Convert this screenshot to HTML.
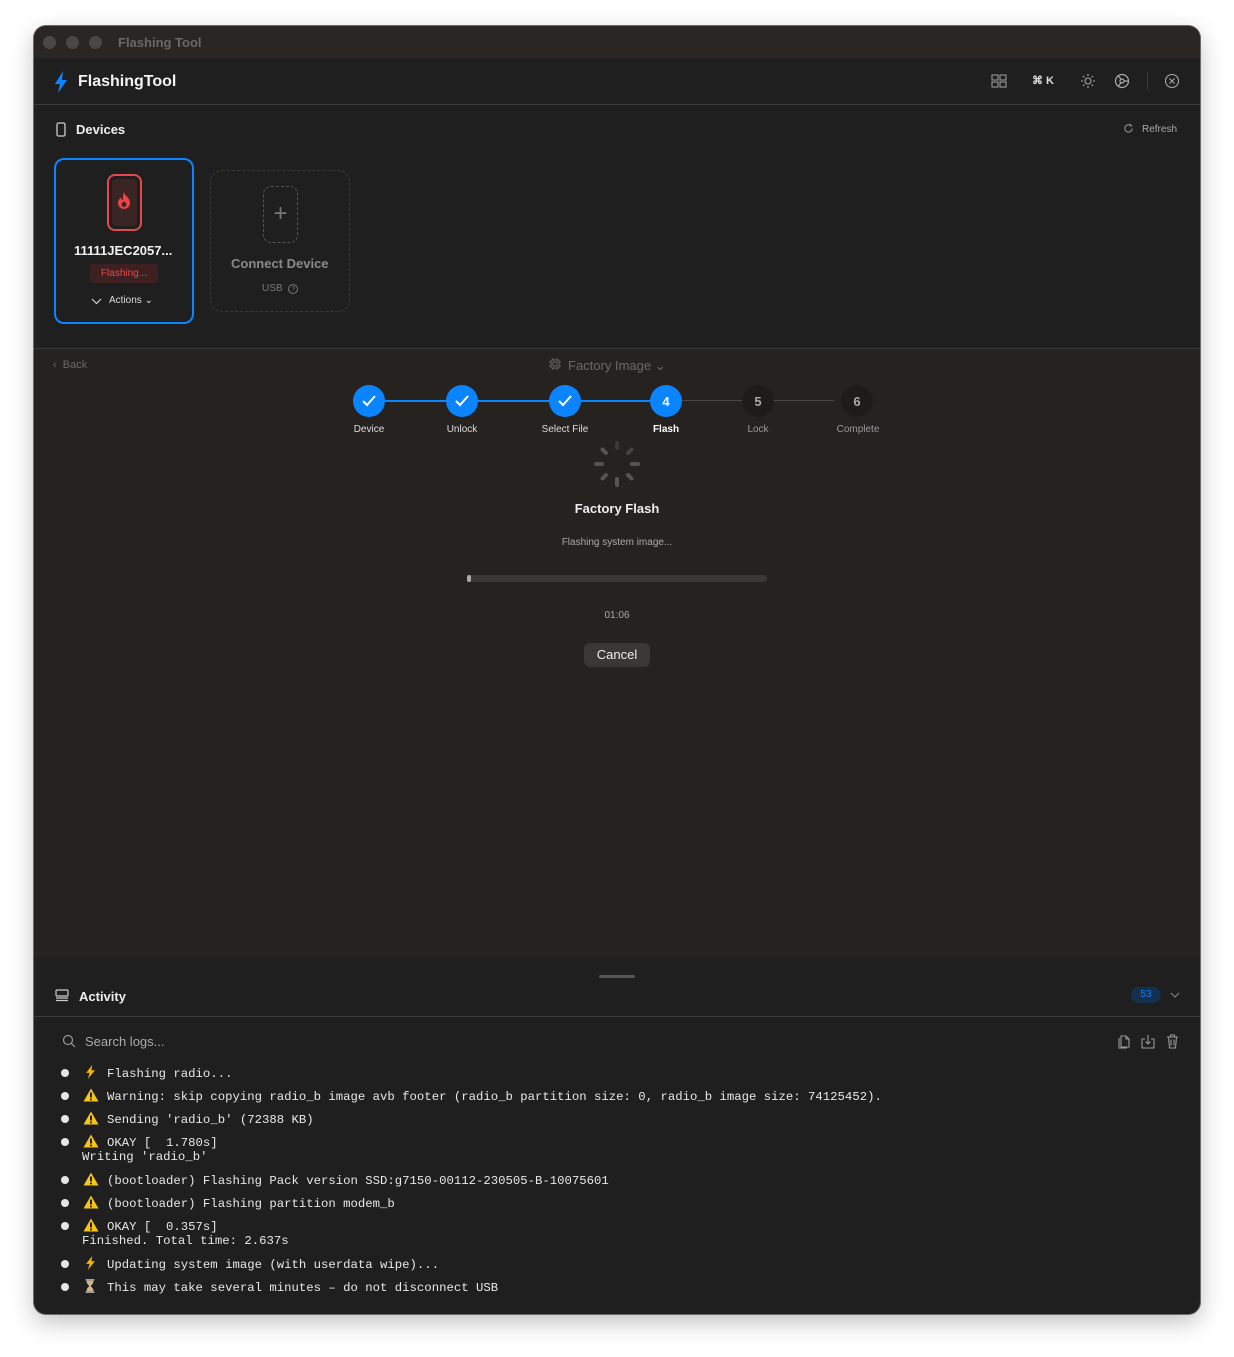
<!DOCTYPE html>
<html><head><meta charset="utf-8"><style>
*{box-sizing:border-box;margin:0;padding:0}
body{width:1234px;height:1357px;background:#fff;position:relative;font-family:"Liberation Sans",sans-serif;overflow:hidden}
.win{position:absolute;left:34px;top:26px;width:1166px;height:1288px;border-radius:12px;overflow:hidden;background:#1f1f1f;box-shadow:0 0 0 1px #6a6a6a,0 8px 24px rgba(0,0,0,.25)}
.a{position:absolute}
.t{position:absolute;white-space:nowrap}
.mono{font-family:"Liberation Mono",monospace;font-size:12.3px;color:#e8e8e8;white-space:pre}
.dot{position:absolute;width:8px;height:8px;border-radius:50%;background:#e6e6e6}
.ic{display:inline-block;width:24px;vertical-align:-2px}
.step{position:absolute;width:32px;height:32px;border-radius:50%;top:359px;display:flex;align-items:center;justify-content:center;font-weight:bold;font-size:13px}
.lbl{position:absolute;top:398px;font-size:10px;transform:translateX(-50%);white-space:nowrap}
</style></head><body>
<svg width="0" height="0" style="position:absolute"><defs>
<symbol id="w" viewBox="0 0 16 14"><path d="M8 0.5L15.5 13.5H0.5z" fill="#f5c518"/><path d="M8 4.5v5" stroke="#111" stroke-width="1.8"/><circle cx="8" cy="11.5" r="1" fill="#111"/></symbol>
<symbol id="b" viewBox="0 0 16 16"><path d="M10 0L3 9h4l-2 7 8-10H9z" fill="#f5b800"/></symbol>
<symbol id="h" viewBox="0 0 16 16"><path d="M3 1h10M3 15h10" stroke="#ccc" stroke-width="1.5"/><path d="M4 2h8c0 4-3 5-3 6s3 2 3 6H4c0-4 3-5 3-6S4 6 4 2z" fill="#d9b48a"/></symbol>
</defs></svg>
<div class="win">
 <div class="a" style="left:0;top:0;width:1166px;height:32px;background:#2a2624"></div>
 <div class="a" style="left:9px;top:10px;width:13px;height:13px;border-radius:50%;background:#4b4745"></div>
 <div class="a" style="left:32px;top:10px;width:13px;height:13px;border-radius:50%;background:#4b4745"></div>
 <div class="a" style="left:55px;top:10px;width:13px;height:13px;border-radius:50%;background:#4b4745"></div>
 <div class="t" style="left:84px;top:9px;font-size:13px;font-weight:bold;color:#6c6763">Flashing Tool</div>
 <div class="a" style="left:0;top:32px;width:1166px;height:47px;background:#1f1f1f;border-bottom:1px solid #3a3a3a"></div>
 <svg class="a" style="left:20px;top:45px" width="14" height="22" viewBox="0 0 14 22"><path d="M9 0L1 13h5l-2 9 9-13H8z" fill="#0a84ff"/></svg>
 <div class="t" style="left:44px;top:47px;font-size:16px;font-weight:bold;color:#f2f2f2">FlashingTool</div>
 <svg class="a" style="left:957px;top:48px" width="16" height="14" viewBox="0 0 16 14" fill="none" stroke="#999" stroke-width="1.1"><rect x="1" y="1" width="6" height="5"/><rect x="9" y="1" width="6" height="5"/><rect x="1" y="8" width="6" height="5"/><rect x="9" y="8" width="6" height="5"/></svg>
 <div class="t" style="left:998px;top:48px;font-size:11px;color:#ddd;font-weight:bold">⌘ K</div>
 <svg class="a" style="left:1046px;top:47px" width="16" height="16" viewBox="0 0 16 16" fill="none" stroke="#aaa" stroke-width="1.1"><circle cx="8" cy="8" r="3"/><path d="M8 1v2M8 13v2M1 8h2M13 8h2M3 3l1.4 1.4M11.6 11.6L13 13M3 13l1.4-1.4M11.6 4.4L13 3"/></svg>
 <svg class="a" style="left:1080px;top:47px" width="16" height="16" viewBox="0 0 16 16" fill="none" stroke="#aaa" stroke-width="1.2"><circle cx="8" cy="8" r="6.5"/><circle cx="8" cy="8" r="2"/><path d="M10 8h4.5M7 6.2L4 2.5M7 9.8L4 13.5"/></svg>
 <div class="a" style="left:1113px;top:46px;width:1px;height:18px;background:#3a3a3a"></div>
 <svg class="a" style="left:1130px;top:47px" width="16" height="16" viewBox="0 0 16 16" fill="none" stroke="#aaa" stroke-width="1.1"><circle cx="8" cy="8" r="6.5"/><path d="M5.5 5.5l5 5M10.5 5.5l-5 5"/></svg>
 <svg class="a" style="left:22px;top:96px" width="10" height="15" viewBox="0 0 10 15" fill="none" stroke="#ccc" stroke-width="1.3"><rect x="1" y="1" width="8" height="13" rx="1.5"/></svg>
 <div class="t" style="left:42px;top:96px;font-size:13px;font-weight:bold;color:#eee">Devices</div>
 <svg class="a" style="left:1089px;top:97px" width="11" height="11" viewBox="0 0 12 12" fill="none" stroke="#999" stroke-width="1.1"><path d="M10 6a4 4 0 1 1-2-3.5M8 0.8v2.2h2.2"/></svg>
 <div class="t" style="left:1108px;top:98px;font-size:10px;color:#aaa">Refresh</div>
 <div class="a" style="left:20px;top:132px;width:140px;height:166px;border:2px solid #0a84ff;border-radius:10px"></div>
 <div class="a" style="left:73px;top:148px;width:35px;height:57px;border:2px solid #e5484d;border-radius:8px;padding:3px"><div style="width:100%;height:100%;background:#3a2424;border-radius:4px"></div></div>
 <svg class="a" style="left:83px;top:166px" width="14" height="17" viewBox="0 0 14 17"><path d="M7 0C8 4 13 6 13 11a6 6 0 0 1-12 0c0-3 2-4 3-6 0 2 1 3 2 3C6 5 6 3 7 0z" fill="#ee4444"/><path d="M7 9c1 1.5 2.5 2 2.5 3.5a2.5 2.5 0 0 1-5 0C4.5 11 6 10.5 7 9z" fill="#3a2424"/></svg>
 <div class="t" style="left:40px;top:217px;font-size:13px;font-weight:bold;color:#f2f2f2">11111JEC2057...</div>
 <div class="a" style="left:56px;top:238px;width:68px;height:19px;background:#3f2020;border-radius:3px;color:#e5484d;font-size:10px;text-align:center;line-height:19px">Flashing...</div>
 <svg class="a" style="left:57px;top:272px" width="11" height="7" viewBox="0 0 11 7" fill="none" stroke="#ddd" stroke-width="1.1"><path d="M1 1l4.5 4.5L10 1"/></svg>
 <div class="t" style="left:75px;top:269px;font-size:10px;color:#ddd">Actions ⌄</div>
 <div class="a" style="left:176px;top:144px;width:140px;height:142px;border:1.5px dashed #3a3a3a;border-radius:12px"></div>
 <div class="a" style="left:229px;top:160px;width:35px;height:57px;border:1.5px dashed #555;border-radius:8px;color:#777;font-size:24px;text-align:center;line-height:54px;font-weight:lighter">+</div>
 <div class="t" style="left:197px;top:230px;font-size:13px;color:#8a8a8a;font-weight:bold">Connect Device</div>
 <div class="t" style="left:228px;top:257px;font-size:10px;color:#777">USB <span style="display:inline-block;width:10px;height:10px;border:1px solid #777;border-radius:50%;font-size:7px;text-align:center;line-height:9px;margin-left:3px">?</span></div>
 <div class="a" style="left:0;top:322px;width:1166px;height:610px;background:#262220;border-top:1px solid #3a3a3a"></div>
 <div class="t" style="left:19px;top:333px;font-size:11px;color:#6d6864">‹&nbsp; Back</div>
 <svg class="a" style="left:515px;top:332px" width="12" height="12" viewBox="0 0 12 12" fill="none" stroke="#666" stroke-width="1"><rect x="2" y="2" width="8" height="8" rx="1"/><rect x="4" y="4" width="4" height="4"/><path d="M4 0v2M8 0v2M4 10v2M8 10v2M0 4h2M0 8h2M10 4h2M10 8h2"/></svg>
 <div class="t" style="left:534px;top:332px;font-size:13px;color:#6d6864">Factory Image ⌄</div>
 <div class="a" style="left:351px;top:374px;width:214px;height:2px;background:#0a84ff"></div>
 <div class="a" style="left:557px;top:374px;width:60px;height:2px;background:#0a84ff"></div>
 <div class="a" style="left:648px;top:374px;width:60px;height:1px;background:#4a4644"></div>
 <div class="a" style="left:740px;top:374px;width:60px;height:1px;background:#4a4644"></div>
 <div class="step" style="left:319px;background:#0a84ff"><svg width="14" height="12" viewBox="0 0 14 12" fill="none" stroke="#fff" stroke-width="2"><path d="M1 6l4 4 8-9"/></svg></div>
 <div class="step" style="left:412px;background:#0a84ff"><svg width="14" height="12" viewBox="0 0 14 12" fill="none" stroke="#fff" stroke-width="2"><path d="M1 6l4 4 8-9"/></svg></div>
 <div class="step" style="left:515px;background:#0a84ff"><svg width="14" height="12" viewBox="0 0 14 12" fill="none" stroke="#fff" stroke-width="2"><path d="M1 6l4 4 8-9"/></svg></div>
 <div class="step" style="left:616px;background:#0a84ff;color:#fff">4</div>
 <div class="step" style="left:708px;background:#1e1c1b;color:#aaa">5</div>
 <div class="step" style="left:807px;background:#1e1c1b;color:#aaa">6</div>
 <div class="lbl" style="left:335px;color:#ddd">Device</div>
 <div class="lbl" style="left:428px;color:#ddd">Unlock</div>
 <div class="lbl" style="left:531px;color:#ddd">Select File</div>
 <div class="lbl" style="left:632px;color:#fff;font-weight:bold">Flash</div>
 <div class="lbl" style="left:724px;color:#999">Lock</div>
 <div class="lbl" style="left:824px;color:#999">Complete</div>
 <svg class="a" style="left:559px;top:414px" width="48" height="48" viewBox="-24 -24 48 48" stroke-width="4" stroke-linecap="round">
  <g stroke="#555"><path d="M0-16v-5" stroke="#3a3a3a"/><path d="M11-11l3.5-3.5" stroke="#444"/><path d="M15 0h6"/><path d="M11 11l3.5 3.5"/><path d="M0 15v6"/><path d="M-11 11l-3.5 3.5"/><path d="M-15 0h-6"/><path d="M-11-11l-3.5-3.5"/></g></svg>
 <div class="t" style="left:0;width:1166px;text-align:center;top:475px;font-size:13px;font-weight:bold;color:#eee">Factory Flash</div>
 <div class="t" style="left:0;width:1166px;text-align:center;top:511px;font-size:10px;color:#aaa">Flashing system image...</div>
 <div class="a" style="left:433px;top:549px;width:300px;height:7px;border-radius:4px;background:#3a3737"></div>
 <div class="a" style="left:433px;top:549px;width:4px;height:7px;border-radius:3px;background:#aaa"></div>
 <div class="t" style="left:0;width:1166px;text-align:center;top:584px;font-size:10px;color:#aaa">01:06</div>
 <div class="a" style="left:550px;top:617px;width:66px;height:24px;border-radius:6px;background:#3a3735;color:#eee;font-size:13px;text-align:center;line-height:24px">Cancel</div>
 <div class="a" style="left:565px;top:949px;width:36px;height:3px;border-radius:2px;background:#555"></div>
 <svg class="a" style="left:21px;top:963px" width="14" height="13" viewBox="0 0 14 13" fill="none" stroke="#ccc" stroke-width="1.2"><rect x="1" y="1" width="12" height="6" rx="1"/><path d="M1 9h12M1 11.5h12"/></svg>
 <div class="t" style="left:45px;top:963px;font-size:13px;font-weight:bold;color:#eee">Activity</div>
 <div class="a" style="left:1097px;top:961px;width:30px;height:16px;border-radius:8px;background:#15304d;color:#0a84ff;font-size:10px;text-align:center;line-height:16px">53</div>
 <svg class="a" style="left:1136px;top:966px" width="10" height="6" viewBox="0 0 10 6" fill="none" stroke="#888" stroke-width="1.1"><path d="M1 1l4 4 4-4"/></svg>
 <div class="a" style="left:0;top:990px;width:1166px;height:1px;background:#3a3a3a"></div>
 <svg class="a" style="left:28px;top:1008px" width="14" height="14" viewBox="0 0 14 14" fill="none" stroke="#999" stroke-width="1.2"><circle cx="6" cy="6" r="4.5"/><path d="M9.3 9.3L13 13"/></svg>
 <div class="t" style="left:51px;top:1008px;font-size:13px;color:#aaa">Search logs...</div>
 <svg class="a" style="left:1082px;top:1007px" width="16" height="16" viewBox="0 0 16 16" fill="none" stroke="#999" stroke-width="1.1"><path d="M5 3h5l3 3v8H5z"/><path d="M3 5v10h8"/><path d="M10 3v3h3"/></svg>
 <svg class="a" style="left:1107px;top:1008px" width="14" height="15" viewBox="0 0 14 15" fill="none" stroke="#999" stroke-width="1.1"><path d="M4 5H1v9h12V5h-3M7 1v9M4.5 7.5L7 10l2.5-2.5"/></svg>
 <svg class="a" style="left:1132px;top:1008px" width="13" height="15" viewBox="0 0 13 15" fill="none" stroke="#999" stroke-width="1.1"><path d="M1 3h11M4.5 3V1h4v2M2.5 3l1 11h6l1-11M5 5.5v6M8 5.5v6"/></svg>
 <div class="dot" style="left:27px;top:1043px"></div><div class="t mono" style="left:49px;top:1039px"><span class="ic"><svg width="15" height="14"><use href="#b"/></svg></span>Flashing radio...</div>
 <div class="dot" style="left:27px;top:1066px"></div><div class="t mono" style="left:49px;top:1062px"><span class="ic"><svg width="16" height="14"><use href="#w"/></svg></span>Warning: skip copying radio_b image avb footer (radio_b partition size: 0, radio_b image size: 74125452).</div>
 <div class="dot" style="left:27px;top:1089px"></div><div class="t mono" style="left:49px;top:1085px"><span class="ic"><svg width="16" height="14"><use href="#w"/></svg></span>Sending 'radio_b' (72388 KB)</div>
 <div class="dot" style="left:27px;top:1112px"></div><div class="t mono" style="left:49px;top:1108px"><span class="ic"><svg width="16" height="14"><use href="#w"/></svg></span>OKAY [  1.780s]</div>
 <div class="t mono" style="left:48px;top:1124px">Writing 'radio_b'</div>
 <div class="dot" style="left:27px;top:1150px"></div><div class="t mono" style="left:49px;top:1146px"><span class="ic"><svg width="16" height="14"><use href="#w"/></svg></span>(bootloader) Flashing Pack version SSD:g7150-00112-230505-B-10075601</div>
 <div class="dot" style="left:27px;top:1173px"></div><div class="t mono" style="left:49px;top:1169px"><span class="ic"><svg width="16" height="14"><use href="#w"/></svg></span>(bootloader) Flashing partition modem_b</div>
 <div class="dot" style="left:27px;top:1196px"></div><div class="t mono" style="left:49px;top:1192px"><span class="ic"><svg width="16" height="14"><use href="#w"/></svg></span>OKAY [  0.357s]</div>
 <div class="t mono" style="left:48px;top:1208px">Finished. Total time: 2.637s</div>
 <div class="dot" style="left:27px;top:1234px"></div><div class="t mono" style="left:49px;top:1230px"><span class="ic"><svg width="15" height="14"><use href="#b"/></svg></span>Updating system image (with userdata wipe)...</div>
 <div class="dot" style="left:27px;top:1257px"></div><div class="t mono" style="left:49px;top:1253px"><span class="ic"><svg width="14" height="14"><use href="#h"/></svg></span>This may take several minutes – do not disconnect USB</div>
</div>
</body></html>
